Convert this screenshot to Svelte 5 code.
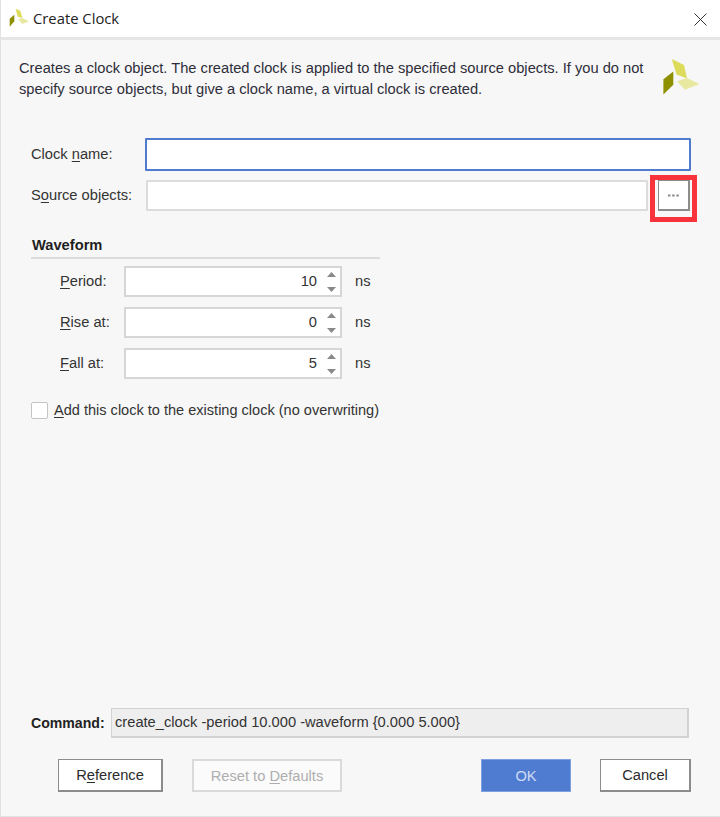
<script>
  const rows = [
    { key: 'P', rest: 'eriod:', value: '10' },
    { key: 'R', rest: 'ise at:', value: '0' },
    { key: 'F', rest: 'all at:', value: '5' }
  ];
</script>

<div class="dialog">
  <header class="titlebar">
    <svg class="logo-small" viewBox="8 6 22 22" aria-hidden="true">
      <path d="M15.7 8.7 20.3 10.7 22.3 18 17.7 16.7Z" fill="#dcdc5a" />
      <path d="M18.3 19.3 22.3 18 29 21.3 22.3 24Z" fill="#e8e8a0" />
      <path d="M9.7 18.7 14.3 14.7 14.3 21.3 9.7 26.7Z" fill="#8f9000" />
    </svg>
    <span class="title">Create Clock</span>
    <svg class="close" viewBox="0 0 13 13" aria-hidden="true">
      <path d="M0.5 0.5 12.5 12.5M12.5 0.5 0.5 12.5" stroke="#333" stroke-width="1" fill="none" />
    </svg>
  </header>

  <main class="body">
    <div class="intro">
      <p>Creates a clock object. The created clock is applied to the specified source objects. If you do not specify source objects, but give a clock name, a virtual clock is created.</p>
      <svg class="logo-big" viewBox="660 56 42 42" aria-hidden="true">
        <path d="M671.8 59 684 65 687 78.5 676.5 74.5Z" fill="#dcdc5a" />
        <path d="M677 81.3 687 78 699.5 84 685 89.8Z" fill="#e8e8a0" />
        <path d="M663.4 79.3 673.3 71.5 673.3 84.7 663.4 94.5Z" fill="#8f9000" />
      </svg>
    </div>

    <div class="form-row name-row">
      <label class="main-label" for="clock-name">Clock <u>n</u>ame:</label>
      <div class="text-input focused" id="clock-name"></div>
    </div>

    <div class="form-row source-row">
      <span class="main-label">S<u>o</u>urce objects:</span>
      <div class="text-input source"></div>
      <div class="browse-wrap">
        <button class="browse">
          <svg viewBox="0 0 11 3" width="11" height="3" aria-hidden="true">
            <rect x="0" y="0.5" width="2.4" height="2" fill="#888" />
            <rect x="4.2" y="0.5" width="2.4" height="2" fill="#888" />
            <rect x="8.4" y="0.5" width="2.4" height="2" fill="#888" />
          </svg>
        </button>
        <div class="highlight"></div>
      </div>
    </div>

    <section class="waveform">
      <h2>Waveform</h2>
      {#each rows as row}
        <div class="spin-row">
          <span class="spin-label"><u>{row.key}</u>{row.rest}</span>
          <div class="spin">
            <span class="spin-value">{row.value}</span>
            <div class="arrows">
              <svg viewBox="0 0 9 5" width="9" height="5" aria-hidden="true"><path d="M0 5 4.5 0 9 5Z" fill="#8a8a8a" /></svg>
              <svg viewBox="0 0 9 5" width="9" height="5" aria-hidden="true"><path d="M0 0 9 0 4.5 5Z" fill="#8a8a8a" /></svg>
            </div>
          </div>
          <span class="unit">ns</span>
        </div>
      {/each}
    </section>

    <div class="check-row">
      <span class="checkbox"></span>
      <span class="check-label"><u>A</u>dd this clock to the existing clock (no overwriting)</span>
    </div>

    <div class="spacer"></div>

    <div class="command">
      <strong>Command:</strong>
      <div class="command-field">create_clock -period 10.000 -waveform &#123;0.000 5.000&#125;</div>
    </div>

    <footer class="buttons">
      <button class="btn reference">R<u>e</u>ference</button>
      <button class="btn reset">Reset to <u>D</u>efaults</button>
      <div class="push"></div>
      <button class="btn ok">OK</button>
      <button class="btn cancel">Cancel</button>
    </footer>
  </main>
</div>

<style>
  :global(body) {
    margin: 0;
    background: #f7f7f7;
  }

  .dialog {
    width: 720px;
    height: 817px;
    box-sizing: border-box;
    display: flex;
    flex-direction: column;
    overflow: hidden;
    font-family: "Liberation Sans", Arial, sans-serif;
    font-size: 14.68px;
    color: #2b2b2b;
    background: #f7f7f7;
    border-left: 1px solid #e2e2e2;
    border-bottom: 1px solid #e2e2e2;
  }

  u {
    text-underline-offset: 2px;
  }

  .titlebar {
    flex: none;
    height: 37px;
    display: flex;
    align-items: center;
    background: #fff;
    border-bottom: 3px solid #e6e6e6;
    padding: 0 13px 0 7px;
    box-sizing: content-box;
  }

  .logo-small {
    width: 22px;
    height: 22px;
    margin-right: 3px;
    margin-top: -3px;
  }

  .title {
    font-family: "Open Sans", "Noto Sans", sans-serif;
    font-size: 14.8px;
    color: #222;
    flex: 1;
    margin-top: -1px;
  }

  .close {
    width: 13px;
    height: 13px;
    margin-top: 1px;
  }

  .body {
    flex: 1;
    display: flex;
    flex-direction: column;
    padding: 0 29px 24px 30px;
    min-height: 0;
  }

  .intro {
    position: relative;
    height: 98px;
    margin-left: -12px;
    flex: none;
  }

  .intro p {
    margin: 0;
    padding-top: 18px;
    width: 634px;
    line-height: 21px;
    color: #2e2e3a;
  }

  .logo-big {
    position: absolute;
    left: 641px;
    top: 16px;
    width: 42px;
    height: 42px;
  }

  .form-row {
    display: flex;
    align-items: center;
    flex: none;
  }

  .main-label {
    width: 114px;
    flex: none;
    color: #333;
    margin-top: -2px;
  }

  .text-input {
    box-sizing: border-box;
    background: #fff;
    border: 1px solid #d0d0d0;
    border-radius: 1px;
  }

  .name-row {
    height: 33px;
  }

  .name-row .text-input {
    flex: 1;
    height: 33px;
    border: 2px solid #4f7cd0;
  }

  .source-row {
    margin-top: 9px;
    height: 31px;
  }

  .source {
    margin-left: 1px;
    flex: none;
    width: 502px;
    height: 31px;
    border-width: 2px;
    border-color: #dcdcdc;
  }

  .browse-wrap {
    position: relative;
    margin-left: 10px;
    width: 32px;
    height: 31px;
  }

  .browse {
    width: 32px;
    height: 31px;
    padding: 0;
    display: flex;
    align-items: center;
    justify-content: center;
    background: #fff;
    border: 1px solid #8c8c8c;
    border-width: 1px 2px 2px 1px;
    box-sizing: border-box;
  }

  .highlight {
    position: absolute;
    left: -8px;
    top: -5px;
    width: 47px;
    height: 47px;
    box-sizing: border-box;
    border: 5px solid #f8333c;
    pointer-events: none;
  }

  .waveform {
    margin-top: 26px;
    width: 349px;
    flex: none;
  }

  h2 {
    margin: 0 0 7px;
    padding-left: 1px;
    font-size: 14.68px;
    font-weight: 700;
    line-height: 16px;
    height: 20px;
    color: #1f1f1f;
    border-bottom: 2px solid #dcdcdc;
    box-sizing: content-box;
  }

  .spin-row {
    display: flex;
    align-items: center;
    height: 31px;
    margin-bottom: 10px;
  }

  .spin-label {
    width: 64px;
    margin-left: 29px;
    flex: none;
    color: #333;
    margin-top: -2px;
  }

  .spin {
    box-sizing: border-box;
    width: 218px;
    height: 31px;
    flex: none;
    background: #fff;
    border: 2px solid #d6d6d6;
    display: flex;
    align-items: center;
    justify-content: flex-end;
    padding-right: 4px;
  }

  .spin-value {
    margin-right: 10px;
    color: #333;
    margin-top: -1px;
  }

  .arrows {
    display: flex;
    flex-direction: column;
    gap: 10px;
  }

  .unit {
    margin-left: 13px;
    color: #333;
    margin-top: -2px;
  }

  .check-row {
    display: flex;
    align-items: center;
    margin-top: 12px;
    flex: none;
    height: 18px;
  }

  .checkbox {
    width: 17px;
    height: 17px;
    box-sizing: border-box;
    background: #fff;
    border: 1px solid #c4c4c4;
    border-radius: 2px;
    margin-right: 6px;
  }

  .check-label {
    color: #333;
    font-size: 14.55px;
  }

  .spacer {
    flex: 1;
  }

  .command {
    display: flex;
    align-items: center;
    flex: none;
    height: 30px;
  }

  .command strong {
    width: 80px;
    flex: none;
    color: #222;
    font-size: 14.1px;
  }

  .command-field {
    box-sizing: border-box;
    width: 578px;
    height: 30px;
    line-height: 26px;
    padding-left: 3px;
    background: #eeeeee;
    border: 1px solid #d2d2d2;
    border-width: 1px 2px 2px 1px;
    color: #333;
  }

  .buttons {
    display: flex;
    align-items: center;
    margin-top: 21px;
    padding-left: 27px;
    flex: none;
  }

  .push {
    flex: 1;
  }

  .btn {
    box-sizing: border-box;
    height: 33px;
    padding: 0;
    font: inherit;
    background: #fff;
    color: #2b2b2b;
    border: 2px solid #8c8c8c;
    border-width: 1px 2px 2px 1px;
  }

  .reference {
    width: 105px;
  }

  .reset {
    width: 150px;
    margin-left: 29px;
    color: #aeaeae;
    border: 2px solid #dadada;
    background: #fbfbfb;
  }

  .ok {
    width: 90px;
    background: #4f7cd0;
    color: #cfdcf5;
    border: 1px solid #7da0e0;
  }

  .cancel {
    width: 91px;
    margin-left: 29px;
  }
</style>
